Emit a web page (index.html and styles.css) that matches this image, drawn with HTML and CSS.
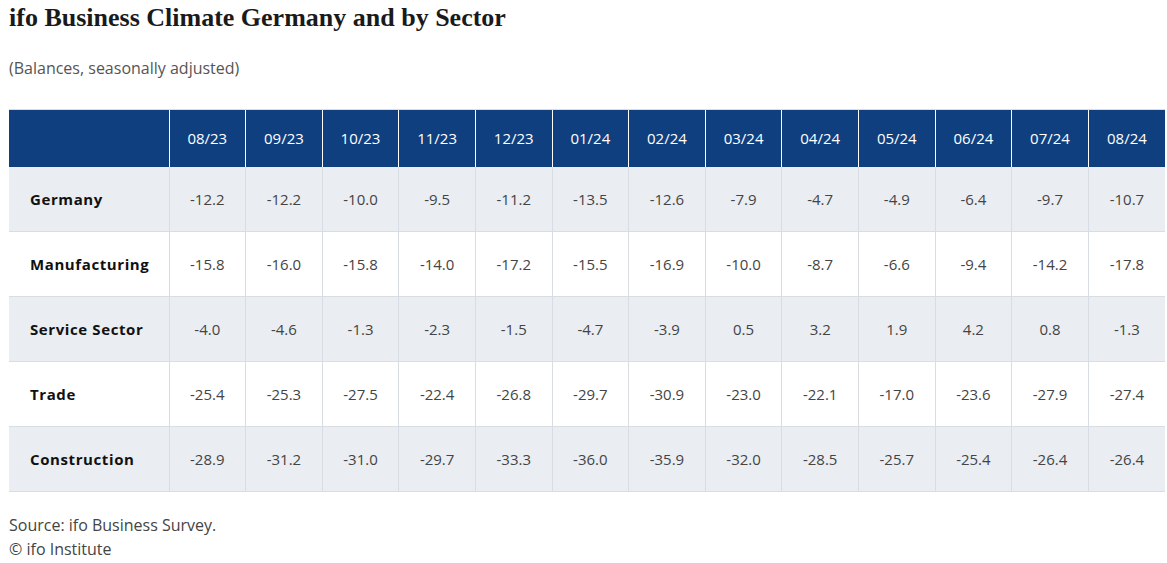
FILE: index.html
```html
<!DOCTYPE html>
<html lang="en">
<head>
<meta charset="utf-8">
<title>ifo Business Climate Germany and by Sector</title>
<link rel="stylesheet" href="styles.css">
</head>
<body>
<div class="page">
  <h1 class="title">ifo Business Climate Germany and by Sector</h1>
  <p class="subtitle">(Balances, seasonally adjusted)</p>
  <table class="data">
    <thead>
      <tr>
        <th class="corner"></th>
        <th>08/23</th><th>09/23</th><th>10/23</th><th>11/23</th><th>12/23</th><th>01/24</th><th>02/24</th><th>03/24</th><th>04/24</th><th>05/24</th><th>06/24</th><th>07/24</th><th>08/24</th>
      </tr>
    </thead>
    <tbody>
      <tr class="alt">
        <th class="label">Germany</th>
        <td>-12.2</td><td>-12.2</td><td>-10.0</td><td>-9.5</td><td>-11.2</td><td>-13.5</td><td>-12.6</td><td>-7.9</td><td>-4.7</td><td>-4.9</td><td>-6.4</td><td>-9.7</td><td>-10.7</td>
      </tr>
      <tr>
        <th class="label">Manufacturing</th>
        <td>-15.8</td><td>-16.0</td><td>-15.8</td><td>-14.0</td><td>-17.2</td><td>-15.5</td><td>-16.9</td><td>-10.0</td><td>-8.7</td><td>-6.6</td><td>-9.4</td><td>-14.2</td><td>-17.8</td>
      </tr>
      <tr class="alt">
        <th class="label">Service Sector</th>
        <td>-4.0</td><td>-4.6</td><td>-1.3</td><td>-2.3</td><td>-1.5</td><td>-4.7</td><td>-3.9</td><td>0.5</td><td>3.2</td><td>1.9</td><td>4.2</td><td>0.8</td><td>-1.3</td>
      </tr>
      <tr>
        <th class="label">Trade</th>
        <td>-25.4</td><td>-25.3</td><td>-27.5</td><td>-22.4</td><td>-26.8</td><td>-29.7</td><td>-30.9</td><td>-23.0</td><td>-22.1</td><td>-17.0</td><td>-23.6</td><td>-27.9</td><td>-27.4</td>
      </tr>
      <tr class="alt">
        <th class="label">Construction</th>
        <td>-28.9</td><td>-31.2</td><td>-31.0</td><td>-29.7</td><td>-33.3</td><td>-36.0</td><td>-35.9</td><td>-32.0</td><td>-28.5</td><td>-25.7</td><td>-25.4</td><td>-26.4</td><td>-26.4</td>
      </tr>
    </tbody>
  </table>
  <div class="footer">
    <p>Source: ifo Business Survey.</p>
    <p>© ifo Institute</p>
  </div>
</div>
</body>
</html>
```
FILE: styles.css
```css
* { box-sizing: border-box; }
html, body { margin: 0; padding: 0; background: #fff; }
body { font-family: "Open Sans", "Noto Sans", sans-serif; color: #333; }
.page { padding: 0 2px 0 9px; }
.title {
  margin: 0;
  padding-top: 4px;
  font-family: "Liberation Serif", "DejaVu Serif", serif;
  font-weight: bold;
  font-size: 26px;
  line-height: 28px;
  color: #1a1a1a;
}
.subtitle {
  margin: 25px 0 0;
  font-size: 16px;
  line-height: 22px;
  color: #555;
}
.data {
  margin-top: 30px;
  width: 1156px;
  border-collapse: collapse;
  table-layout: fixed;
  font-size: 15px;
}
.data thead th {
  background: #0f3f7f;
  color: #fff;
  font-weight: normal;
  height: 57px;
  text-align: center;
  border-left: 1px solid #fff;
  border-top: 1px solid #d8dce3;
}
.data thead th.corner { width: 160px; border-left: none; }
.data tbody tr { height: 65px; }
.data tbody tr.alt { background: #eaedf2; }
.data td {
  text-align: center;
  color: #444;
  border-left: 1px solid #d8dce3;
  border-bottom: 1px solid #d8dce3;
}
.data th.label {
  text-align: left;
  padding-left: 21px;
  font-weight: bold;
  letter-spacing: 0.6px;
  color: #111;
  border-bottom: 1px solid #d8dce3;
}
.footer { margin-top: 21px; font-size: 16px; color: #444; }
.footer p { margin: 0; line-height: 24px; }
```
